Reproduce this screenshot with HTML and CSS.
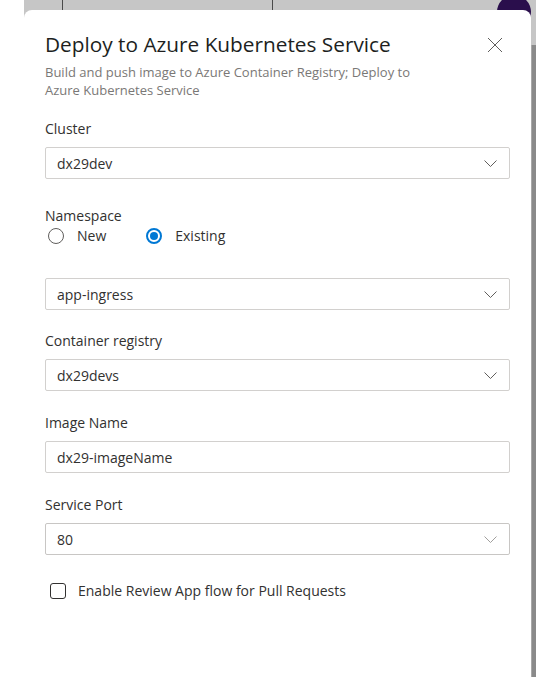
FILE: index.html
```html
<!DOCTYPE html>
<html lang="en">
<head>
<meta charset="utf-8">
<title>Deploy to Azure Kubernetes Service</title>
<link rel="stylesheet" href="styles.css">
</head>
<body>
<div class="stage">
  <div class="backdrop">
    <div class="underlay">
      <span class="divider divider-a"></span>
      <span class="divider divider-b"></span>
      <span class="avatar"></span>
    </div>
    <div class="scroll-strip"></div>
    <div class="panel">
      <div class="header">
        <div class="titles">
          <h1 class="title">Deploy to Azure Kubernetes Service</h1>
          <p class="subtitle">Build and push image to Azure Container Registry; Deploy to Azure Kubernetes Service</p>
        </div>
        <button class="close" aria-label="Close">
          <svg width="16" height="16" viewBox="0 0 16 16"><path d="M1 1 L15 15 M15 1 L1 15" stroke="#605e5c" stroke-width="1" fill="none"/></svg>
        </button>
      </div>

      <div class="field first">
        <div class="label">Cluster</div>
        <div class="select">
          <span class="value">dx29dev</span>
          <svg class="chev" width="13" height="7" viewBox="0 0 13 7"><path d="M0.5 0.5 L6.5 6.5 L12.5 0.5" stroke="#605e5c" stroke-width="1" fill="none"/></svg>
        </div>
      </div>

      <div class="field ns">
        <div class="label">Namespace</div>
        <div class="radios">
          <span class="radio"><span class="dot"></span>New</span>
          <span class="radio checked"><span class="dot"></span>Existing</span>
        </div>
        <div class="select">
          <span class="value">app-ingress</span>
          <svg class="chev" width="13" height="7" viewBox="0 0 13 7"><path d="M0.5 0.5 L6.5 6.5 L12.5 0.5" stroke="#605e5c" stroke-width="1" fill="none"/></svg>
        </div>
      </div>

      <div class="field after-ns">
        <div class="label">Container registry</div>
        <div class="select">
          <span class="value">dx29devs</span>
          <svg class="chev" width="13" height="7" viewBox="0 0 13 7"><path d="M0.5 0.5 L6.5 6.5 L12.5 0.5" stroke="#605e5c" stroke-width="1" fill="none"/></svg>
        </div>
      </div>

      <div class="field">
        <div class="label">Image Name</div>
        <div class="select text">
          <span class="value">dx29-imageName</span>
        </div>
      </div>

      <div class="field">
        <div class="label">Service Port</div>
        <div class="select port">
          <span class="value">80</span>
          <svg class="chev" width="13" height="7" viewBox="0 0 13 7"><path d="M0.5 0.5 L6.5 6.5 L12.5 0.5" stroke="#a19f9d" stroke-width="1" fill="none"/></svg>
        </div>
      </div>

      <label class="check">
        <span class="box"></span>
        <span>Enable Review App flow for Pull Requests</span>
      </label>
    </div>
  </div>
</div>
</body>
</html>
```

FILE: styles.css
```css
* { box-sizing: border-box; }

html, body {
  margin: 0;
  padding: 0;
  background: #ffffff;
  font-family: "Open Sans", "Noto Sans", sans-serif;
  color: #323130;
}

.stage {
  padding-left: 24px;
  height: 677px;
  overflow: hidden;
}

.backdrop {
  position: relative;
  width: 512px;
  height: 677px;
  background: #c6c6c6;
  padding-top: 10px;
  padding-right: 5px;
  display: flex;
  flex-direction: column;
}

.underlay {
  position: absolute;
  left: 0;
  top: 0;
  right: 0;
  height: 10px;
}

.divider {
  position: absolute;
  top: 0;
  width: 1px;
  height: 10px;
  background: #4a4a4a;
}
.divider-a { left: 38px; }
.divider-b { left: 248px; }

.avatar {
  position: absolute;
  left: 473px;
  top: -5px;
  width: 34px;
  height: 34px;
  border-radius: 50%;
  background: #2a0e4c;
}

.scroll-strip {
  position: absolute;
  right: 0;
  top: 45px;
  bottom: 0;
  width: 5px;
  background: #8a8a8a;
  border-left: 1px solid #a8a8a8;
}

.panel {
  position: relative;
  flex: 1;
  background: #ffffff;
  border-radius: 8px 8px 0 0;
  padding: 20px 21px 0 21px;
}

.header {
  display: flex;
  align-items: flex-start;
  justify-content: space-between;
}

.title {
  margin: 0;
  font-size: 20.8px;
  font-weight: 400;
  line-height: 28px;
  color: #201f1e;
}

.subtitle {
  margin: 5px 0 0 0;
  font-size: 13px;
  line-height: 18px;
  color: #7a7876;
  width: 400px;
}

.close {
  border: 0;
  background: none;
  padding: 0;
  margin: 7px 7px 0 0;
  width: 16px;
  height: 16px;
  display: block;
}
.close svg { display: block; }

.field { margin-top: 22px; }
.field.first { margin-top: 20px; }
.field.ns { margin-top: 27px; }
.field.after-ns { margin-top: 21px; }

.label {
  font-size: 14px;
  line-height: 20px;
  color: #323130;
  margin-bottom: 8px;
}

.ns .label { margin-bottom: 0; }

.radios {
  display: flex;
  gap: 40px;
  height: 20px;
  align-items: center;
  padding-left: 3px;
  margin-bottom: 32px;
}

.radio {
  display: flex;
  align-items: center;
  gap: 13px;
  font-size: 14px;
  line-height: 20px;
  color: #323130;
}

.radio .dot {
  width: 16px;
  height: 16px;
  border-radius: 50%;
  border: 1px solid #605e5c;
  background: #fff;
  position: relative;
}

.radio.checked .dot {
  border: 2px solid #0078d4;
}
.radio.checked .dot::after {
  content: "";
  position: absolute;
  left: 2px;
  top: 2px;
  width: 8px;
  height: 8px;
  border-radius: 50%;
  background: #0078d4;
}

.select {
  height: 32px;
  border: 1px solid #d2d0ce;
  border-radius: 2px;
  display: flex;
  align-items: center;
  justify-content: space-between;
  padding: 0 12px 0 11px;
  font-size: 14px;
  color: #323130;
}

.select.port { border-color: #c8c6c4; }

.chev { display: block; }

.check {
  display: flex;
  align-items: center;
  gap: 12px;
  margin-top: 26px;
  padding-left: 5px;
  font-size: 14px;
  line-height: 20px;
  color: #323130;
}

.check .box {
  width: 16px;
  height: 16px;
  border: 1px solid #323130;
  border-radius: 3px;
}
```
